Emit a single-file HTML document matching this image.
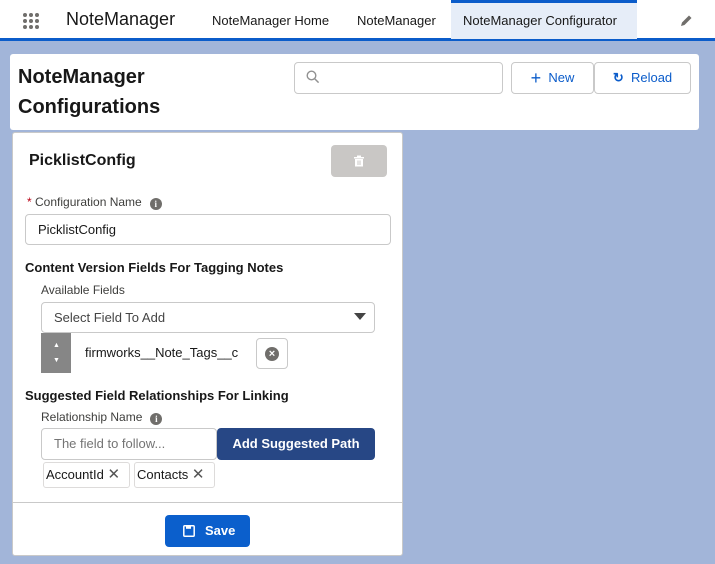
<!DOCTYPE html>
<html><head><style>
*{box-sizing:border-box;margin:0;padding:0}
body{width:715px;height:564px;overflow:hidden;background:#a2b5d9;font-family:"Liberation Sans",Arial,sans-serif;color:#181818;position:relative}
.abs{position:absolute}
.hdr{left:0;top:0;width:715px;height:41px;background:#fff;border-bottom:3px solid #0b5cca}
.dot{width:4px;height:4px;border-radius:50%;background:#706e6b;position:absolute}
.tab{top:0;height:39px;font-size:13px;line-height:41px;color:#181818}
.card{background:#fff;border-radius:3px}
.btn{background:#fff;border:1px solid #c9c9c9;border-radius:4px;color:#0b5cca;font-size:13px;text-align:center}
.lbl{font-size:12px;color:#3e3e3c}
.inp{border:1px solid #c9c9c9;border-radius:4px;background:#fff;font-size:13px;padding-left:12px}
.info{display:inline-block;width:12px;height:12px;border-radius:50%;background:#706e6b;color:#fff;font-size:9px;font-weight:bold;text-align:center;line-height:12px;vertical-align:-1px;margin-left:8px;font-family:"Liberation Serif",serif}
.pill{border:1px solid #dddbda;border-radius:3px;background:#fff;font-size:13px;height:26px;line-height:24px;padding-left:2px}
</style></head><body>
<div class="abs hdr"></div>
<div class="dot" style="left:23px;top:13px"></div><div class="dot" style="left:29px;top:13px"></div><div class="dot" style="left:35px;top:13px"></div>
<div class="dot" style="left:23px;top:19px"></div><div class="dot" style="left:29px;top:19px"></div><div class="dot" style="left:35px;top:19px"></div>
<div class="dot" style="left:23px;top:25px"></div><div class="dot" style="left:29px;top:25px"></div><div class="dot" style="left:35px;top:25px"></div>
<div class="abs" style="left:66px;top:9px;font-size:18px">NoteManager</div>
<div class="abs tab" style="left:212px">NoteManager Home</div>
<div class="abs tab" style="left:357px">NoteManager</div>
<div class="abs tab" style="left:451px;width:186px;background:#e6edf8;border-top:3px solid #0b5cca;line-height:36px;padding-left:12px">NoteManager Configurator</div>
<svg class="abs" style="left:680px;top:14px" width="13" height="13" viewBox="0 0 13 13"><path d="M1 12l1-3.5 7-7 2.5 2.5-7 7z" fill="#706e6b"/></svg>

<div class="abs card" style="left:10px;top:54px;width:689px;height:76px"></div>
<div class="abs" style="left:18px;top:62px;font-size:20px;font-weight:bold;line-height:30px">NoteManager<br>Configurations</div>
<div class="abs inp" style="left:294px;top:62px;width:209px;height:32px"></div>
<svg class="abs" style="left:306px;top:70px" width="14" height="14" viewBox="0 0 14 14"><circle cx="5.5" cy="5.5" r="4.3" fill="none" stroke="#919191" stroke-width="1.4"/><path d="M8.6 8.6l4 4" stroke="#919191" stroke-width="1.5"/></svg>
<div class="abs btn" style="left:511px;top:62px;width:83px;height:32px;line-height:30px"><span style="font-size:18px;vertical-align:-2px">+</span>&nbsp; New</div>
<div class="abs btn" style="left:594px;top:62px;width:97px;height:32px;line-height:30px"><span style="font-weight:bold">↻</span>&nbsp; Reload</div>

<div class="abs card" style="left:12px;top:132px;width:391px;height:424px;border:1px solid #c9c9c9"></div>
<div class="abs" style="left:29px;top:152px;font-size:16px;font-weight:bold">PicklistConfig</div>
<div class="abs" style="left:331px;top:145px;width:56px;height:32px;background:#c9c7c5;border-radius:4px"></div>
<svg class="abs" style="left:353px;top:155px" width="12" height="12" viewBox="0 0 12 12"><rect x="1" y="2" width="10" height="1.5" fill="#fff"/><rect x="4" y="0.5" width="4" height="1.5" fill="#fff"/><rect x="2" y="4" width="8" height="7.5" fill="#fff"/><rect x="4.5" y="5.5" width="1" height="4.5" fill="#c9c7c5"/><rect x="6.5" y="5.5" width="1" height="4.5" fill="#c9c7c5"/></svg>
<div class="abs lbl" style="left:27px;top:195px"><span style="color:#ba0517">*</span> Configuration Name<span class="info">i</span></div>
<div class="abs inp" style="left:25px;top:214px;width:366px;height:31px;line-height:29px">PicklistConfig</div>
<div class="abs" style="left:25px;top:260px;font-size:13px;font-weight:bold">Content Version Fields For Tagging Notes</div>
<div class="abs lbl" style="left:41px;top:283px">Available Fields</div>
<div class="abs inp" style="left:41px;top:302px;width:334px;height:31px;line-height:29px;color:#444">Select Field To Add</div>
<svg class="abs" style="left:354px;top:313px" width="12" height="8"><path d="M0 0h12L6 7z" fill="#444"/></svg>
<div class="abs" style="left:41px;top:333px;width:30px;height:40px;background:#868686"></div>
<div class="abs" style="left:53px;top:338px;color:#fff;font-size:7px;line-height:15px">▲<br>▼</div>
<div class="abs" style="left:85px;top:345px;font-size:13px">firmworks__Note_Tags__c</div>
<div class="abs" style="left:256px;top:338px;width:32px;height:31px;border:1px solid #c9c9c9;border-radius:4px"></div>
<div class="abs" style="left:265px;top:347px;width:14px;height:14px;border-radius:50%;background:#706e6b;color:#fff;font-size:11px;font-weight:bold;text-align:center;line-height:14px">×</div>
<div class="abs" style="left:25px;top:388px;font-size:13px;font-weight:bold">Suggested Field Relationships For Linking</div>
<div class="abs lbl" style="left:41px;top:410px">Relationship Name<span class="info">i</span></div>
<div class="abs inp" style="left:41px;top:428px;width:176px;height:32px;line-height:30px;color:#747474">The field to follow...</div>
<div class="abs" style="left:217px;top:428px;width:158px;height:32px;background:#274785;border-radius:4px;color:#fff;font-size:13px;font-weight:bold;text-align:center;line-height:32px">Add Suggested Path</div>
<div class="abs pill" style="left:43px;top:462px;width:87px">AccountId <span style="color:#555;font-size:15px">✕</span></div>
<div class="abs pill" style="left:134px;top:462px;width:81px">Contacts <span style="color:#555;font-size:15px">✕</span></div>
<div class="abs" style="left:13px;top:502px;width:389px;height:1px;background:#c9c9c9"></div>
<div class="abs" style="left:165px;top:515px;width:85px;height:32px;background:#0b5fcc;border-radius:4px;color:#fff;font-size:13px;font-weight:bold;line-height:32px;padding-left:40px">Save</div>
<svg class="abs" style="left:183px;top:525px" width="12" height="12" viewBox="0 0 12 12"><rect x="0.8" y="0.8" width="10.4" height="10.4" rx="1" fill="none" stroke="#fff" stroke-width="1.5"/><rect x="3" y="0.8" width="5" height="3" fill="#fff"/></svg>
</body></html>
